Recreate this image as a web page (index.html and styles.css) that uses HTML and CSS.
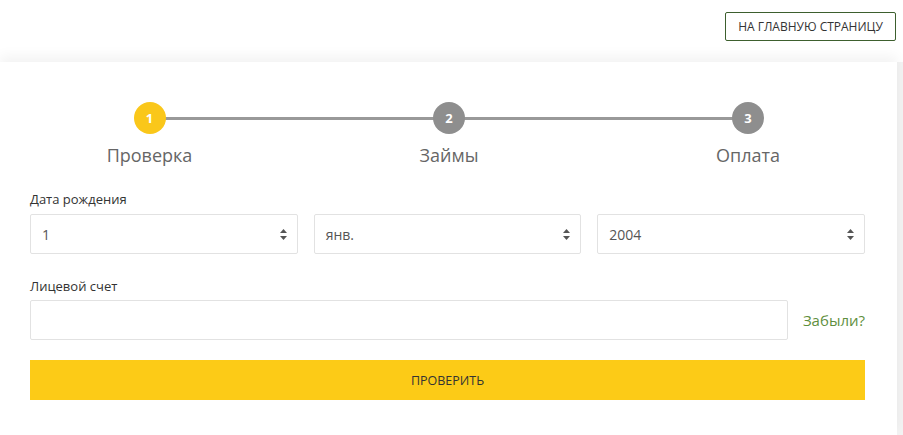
FILE: index.html
```html
<!DOCTYPE html>
<html lang="ru">
<head>
<meta charset="utf-8">
<link rel="stylesheet" href="styles.css">
</head>
<body>
<header class="top">
  <a class="home-btn" href="#">НА ГЛАВНУЮ СТРАНИЦУ</a>
</header>
<main class="card">
  <div class="steps">
    <div class="step active"><span class="dot">1</span><span class="label">Проверка</span></div>
    <div class="step"><span class="dot">2</span><span class="label">Займы</span></div>
    <div class="step"><span class="dot">3</span><span class="label">Оплата</span></div>
  </div>
  <form class="form">
    <div class="field-label">Дата рождения</div>
    <div class="date-row">
      <div class="select"><span>1</span><svg class="arrows" width="7" height="11" viewBox="0 0 7 11"><path d="M3.5 0L7 4H0z M3.5 11L0 7h7z" fill="#555"/></svg></div>
      <div class="select"><span>янв.</span><svg class="arrows" width="7" height="11" viewBox="0 0 7 11"><path d="M3.5 0L7 4H0z M3.5 11L0 7h7z" fill="#555"/></svg></div>
      <div class="select"><span>2004</span><svg class="arrows" width="7" height="11" viewBox="0 0 7 11"><path d="M3.5 0L7 4H0z M3.5 11L0 7h7z" fill="#555"/></svg></div>
    </div>
    <div class="field-label second">Лицевой счет</div>
    <div class="account-row">
      <div class="input"></div>
      <a class="forgot" href="#">Забыли?</a>
    </div>
    <div class="submit">ПРОВЕРИТЬ</div>
  </form>
</main>
</body>
</html>
```
FILE: styles.css
```css
html, body {
  margin: 0;
  padding: 0;
}
body {
  background: #f3f3f3;
  font-family: "Open Sans", "Liberation Sans", sans-serif;
  color: #333;
  width: 903px;
  height: 435px;
  overflow: hidden;
}
.top {
  background: #fff;
  height: 62px;
  display: flex;
  justify-content: flex-end;
  align-items: flex-start;
  padding-right: 7px;
  box-sizing: border-box;
}
.home-btn {
  margin-top: 12px;
  height: 29px;
  width: 171px;
  box-sizing: border-box;
  border: 1px solid #3d5f2e;
  border-radius: 2px;
  display: flex;
  align-items: center;
  justify-content: center;
  font-size: 12px;
  color: #333;
  text-decoration: none;
  letter-spacing: 0;
}
.card {
  width: 897px;
  background: #fff;
  box-shadow: 0 -6px 12px rgba(0,0,0,0.05);
  height: 373px;
  padding-top: 40px;
  box-sizing: border-box;
  position: relative;
}
.steps {
  display: grid;
  grid-template-columns: 299px 300px 298px;
  position: relative;
}
.steps::before {
  content: "";
  position: absolute;
  left: 148px;
  width: 600px;
  top: 15px;
  height: 3px;
  background: #999;
}
.step {
  display: flex;
  flex-direction: column;
  align-items: center;
  position: relative;
}
.dot {
  width: 32px;
  height: 32px;
  border-radius: 50%;
  background: #8e8e8e;
  color: #fff;
  font-weight: 700;
  font-size: 13px;
  display: flex;
  align-items: center;
  justify-content: center;
  position: relative;
}
.step.active .dot {
  background: #fac71a;
}
.label {
  margin-top: 10px;
  font-size: 18px;
  color: #666;
  line-height: 22px;
}
.form {
  padding: 24px 32px 0 30px;
}
.field-label {
  font-size: 13px;
  color: #333;
  line-height: 18px;
  margin-bottom: 6px;
}
.field-label.second {
  margin-top: 23px;
  margin-bottom: 5px;
}
.date-row {
  display: flex;
  gap: 16px;
}
.select {
  flex: 1 1 0;
  height: 40px;
  box-sizing: border-box;
  border: 1px solid #e2e2e2;
  border-radius: 2px;
  display: flex;
  align-items: center;
  justify-content: space-between;
  padding: 0 10px 0 11px;
  font-size: 14px;
  color: #555;
}
.account-row {
  display: flex;
  align-items: center;
  gap: 15px;
}
.input {
  width: 758px;
  height: 40px;
  box-sizing: border-box;
  border: 1px solid #e2e2e2;
  border-radius: 2px;
}
.forgot {
  font-size: 15px;
  color: #5f8f3e;
  text-decoration: none;
}
.submit {
  margin-top: 20px;
  height: 40px;
  background: #fccb17;
  display: flex;
  align-items: center;
  justify-content: center;
  font-size: 12.5px;
  color: #333;
}
```
